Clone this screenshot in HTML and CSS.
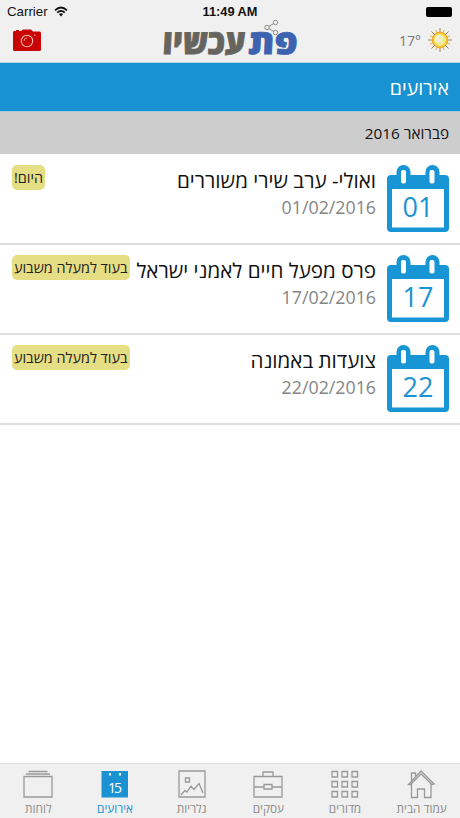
FILE: index.html
```html
<!DOCTYPE html>
<html lang="he" dir="rtl">
  <head>
    <meta charset="utf-8" />
    <title>אירועים</title>
    <link rel="stylesheet" href="styles.css">
  </head>

  <body>
    <div class="app">
      <header class="header">
        <div class="status" dir="ltr">
          <div class="carrier">
            <span>Carrier</span>
            <svg width="14" height="11" viewBox="0 0 14 11">
              <g fill="none" stroke="#111" stroke-width="1.7">
                <path d="M1 4.3 Q7 -1.3 13 4.3" />
                <path d="M3.2 6.7 Q7 3 10.8 6.7" />
              </g>
              <path d="M4.9 8.1 Q7 6.3 9.1 8.1 L7 10.4 Z" fill="#111" />
            </svg>
          </div>
          <div class="time">11:49 AM</div>
          <div class="battery"></div>
        </div>
        <div class="navbar" dir="ltr">
          <svg class="camera" width="28" height="22" viewBox="0 0 28 22">
            <path d="M1 2 H3 V1 H6 V2 H8 L10 0.500 H18 L20 2.500 H26.500 Q28 2.500 28 4 V20.500 Q28 22 26.500 22 H1.500 Q0 22 0 20.500 V3.500 Q0 2 1 2 Z" fill="#c90404" />
            <circle cx="14" cy="12" r="5.700" fill="none" stroke="#f3b9b5" stroke-width="1.100" />
            <path d="M11 12 a3 3 0 0 1 3 -3" fill="none" stroke="#f3b9b5" stroke-width="0.800" />
            <circle cx="21.800" cy="6.200" r="0.700" fill="#f3b9b5" />
          </svg>
          <svg class="logo" width="140" height="54" viewBox="-2 -9 140 54">
            <g transform="translate(0 31) skewX(-3)" class="logo-text">
              <text x="86" y="0" textLength="49" lengthAdjust="spacingAndGlyphs" fill="#3d62b0" stroke="#3d62b0">פת</text>
              <text x="0" y="0" textLength="83" lengthAdjust="spacingAndGlyphs" fill="#66645f" stroke="#66645f">עכשיו</text>
            </g>
            <g fill="#f0f0f0" stroke="#8c8c8c" stroke-width="1">
              <path d="M113.500 -0.500 L105 4.500 L113.500 9.500" fill="none" />
              <circle cx="113.500" cy="-0.500" r="2.200" />
              <circle cx="105" cy="4.500" r="2.200" />
              <circle cx="113.500" cy="9.500" r="2.200" />
            </g>
          </svg>
          <div class="weather">
            <span>17°</span>
            <svg width="26" height="26" viewBox="-13 -13 26 26">
              <g stroke="#8d7d3c" stroke-width="0.9">
                <path d="M0 -12V12M-12 0H12M-8.500 -8.500L8.500 8.500M-8.500 8.500L8.500 -8.500" />
                <path d="M-4.200 -10L4.200 10M-10 -4.200L10 4.200M4.200 -10L-4.200 10M10 -4.200L-10 4.200" stroke="#e3a532" />
              </g>
              <circle r="7.600" fill="#f8cf35" stroke="#eda72c" stroke-width="1.200" />
              <circle r="5.900" fill="#f0e98a" />
              <circle cx="-1" cy="-1" r="4" fill="#eef1cb" />
            </svg>
          </div>
        </div>
      </header>

      <h1 class="title">אירועים</h1>
      <h2 class="month">פברואר 2016</h2>

      <svg class="defs" width="0" height="0">
        <symbol id="calendar" viewBox="0 0 62 68">
          <path d="M4 10 H9.500 V7 A7 7 0 0 1 23.500 7 V10 H38.500 V7 A7 7 0 0 1 52.500 7 V10 H58 Q62 10 62 14 V63 Q62 67 58 67 H4 Q0 67 0 63 V14 Q0 10 4 10 Z" fill="#1795d4" />
          <rect x="14" y="5" width="5" height="13.500" rx="2" fill="#fff" />
          <rect x="42.500" y="5" width="5" height="13.500" rx="2" fill="#fff" />
          <rect x="5" y="24" width="52" height="38.500" fill="#fff" />
        </symbol>
      </svg>

      <main class="events">
        <div class="event">
          <div class="cal">
            <svg width="62" height="68"><use href="#calendar" /></svg>
            <span class="day">01</span>
          </div>
          <div class="info">
            <div class="name">ואולי- ערב שירי משוררים</div>
            <div class="date">01/02/2016</div>
          </div>
          <div class="badge">היום!</div>
        </div>
        <div class="event">
          <div class="cal">
            <svg width="62" height="68"><use href="#calendar" /></svg>
            <span class="day">17</span>
          </div>
          <div class="info">
            <div class="name">פרס מפעל חיים לאמני ישראל</div>
            <div class="date">17/02/2016</div>
          </div>
          <div class="badge">בעוד למעלה משבוע</div>
        </div>
        <div class="event">
          <div class="cal">
            <svg width="62" height="68"><use href="#calendar" /></svg>
            <span class="day">22</span>
          </div>
          <div class="info">
            <div class="name">צועדות באמונה</div>
            <div class="date">22/02/2016</div>
          </div>
          <div class="badge">בעוד למעלה משבוע</div>
        </div>
      </main>

      <nav class="tabs">
        <div class="tab">
          <svg width="30" height="30" viewBox="0 0 30 30">
            <path d="M1.500 15.500 L14 2 L27 15 L25 15.500 L14 5 L3.500 15.500 Z M4.500 11.500 V4 H8.500 V7 M4.500 15 V28.500 H10.500 V20 H17.500 V28.500 H24 V15" />
          </svg>
          <span>עמוד הבית</span>
        </div>
        <div class="tab">
          <svg width="30" height="30" viewBox="0 0 30 30">
            <path d="M2 2.500h5.500v5.500h-5.500zM12 2.500h5.500v5.500h-5.500zM22 2.500h5.500v5.500h-5.500zM2 12.500h5.500v5.500h-5.500zM12 12.500h5.500v5.500h-5.500zM22 12.500h5.500v5.500h-5.500zM2 22.500h5.500v5.500h-5.500zM12 22.500h5.500v5.500h-5.500zM22 22.500h5.500v5.500h-5.500z" />
          </svg>
          <span>מדורים</span>
        </div>
        <div class="tab">
          <svg width="30" height="30" viewBox="0 0 30 30">
            <path d="M1 7.500 H29 V28 H1 Z M10 7.500 V3 H20 V7.500 M1 18 H11 M19 18 H29 M11 15.500 H19 V20 H11 Z" />
          </svg>
          <span>עסקים</span>
        </div>
        <div class="tab">
          <svg width="30" height="30" viewBox="0 0 30 30">
            <path d="M2 2 H28 V28 H2 Z M4 26 L8 21.500 L10 23 L14 17 L17 20.500 L22 14.500 L26 24 M8.500 9 h4 v4 h-4 z" />
          </svg>
          <span>גלריות</span>
        </div>
        <div class="tab active">
          <svg width="30" height="30" viewBox="0 0 30 30">
            <rect x="1.500" y="2" width="26.500" height="26.500" fill="#1b93d3" stroke="none" />
            <path d="M10 4 v2.500 M20 4 v2.500" stroke="#fff" stroke-width="2" />
            <text x="8" y="23.500" textLength="14" class="icon-day">15</text>
          </svg>
          <span>אירועים</span>
        </div>
        <div class="tab">
          <svg width="30" height="30" viewBox="0 0 30 30">
            <path d="M1 7.500 H29 V28 H1 Z M3 5 H27 M5.500 2.500 H24.500" />
          </svg>
          <span>לוחות</span>
        </div>
      </nav>
    </div>
  </body>
</html>
```
FILE: styles.css
```css
body {
  margin: 0;
  background-color: #fff;
  font-family: "Open Sans", "Noto Sans", sans-serif;
}
.app {
  display: flex;
  flex-direction: column;
  height: 818px;
  overflow: hidden;
}
.header {
  box-sizing: border-box;
  height: 63px;
  background-color: #f0f0f0;
  border-bottom: 1px solid #b5d5e6;
}
.status {
  display: grid;
  grid-template-columns: 1fr auto 1fr;
  align-items: center;
  height: 23px;
  padding: 0 7px;
  font-family: "Liberation Sans", sans-serif;
  font-size: 13.3px;
  color: #111;
}
.carrier {
  display: flex;
  align-items: center;
  gap: 6px;
}
.time {
  font-weight: bold;
  font-size: 12.8px;
}
.battery {
  justify-self: end;
  width: 25px;
  height: 10px;
  margin-right: 2px;
  border-radius: 2px;
  background-color: #000;
  box-shadow: 1px 0 0 #000;
}
.navbar {
  display: grid;
  grid-template-columns: 1fr auto 1fr;
  height: 39px;
  padding: 0 13px;
}
.camera {
  margin-top: 6px;
}
.logo {
  margin-top: -9px;
}
.logo-text {
  font-size: 34px;
  font-weight: 800;
  direction: ltr;
  stroke-width: 0.8px;
}
.weather {
  display: flex;
  justify-content: flex-end;
  align-items: center;
  gap: 6px;
  height: 34px;
  margin-right: -6px;
  font-size: 14px;
  color: #777;
}
.title {
  box-sizing: border-box;
  height: 49px;
  margin: 0;
  padding: 0 11px;
  border-bottom: 1px solid #a9cde0;
  background-color: #1992d1;
  color: #fff;
  font-size: 19.5px;
  font-weight: 400;
  line-height: 49px;
}
.month {
  height: 42px;
  margin: 0;
  padding: 0 11px;
  background-color: #cdcdcd;
  color: #111;
  font-size: 15.3px;
  font-weight: 400;
  line-height: 43px;
}
.defs {
  position: absolute;
}
.events {
  flex: 1;
  padding-top: 1px;
}
.event {
  display: flex;
  box-sizing: border-box;
  height: 90px;
  padding: 10px 11px 0 12px;
  border-bottom: 2px solid #dedede;
}
.cal {
  display: grid;
  width: 62px;
  height: 68px;
}
.cal > * {
  grid-area: 1 / 1;
}
.day {
  padding-top: 22px;
  text-align: center;
  font-size: 27px;
  line-height: 40px;
  color: #1b93d3;
}
.info {
  flex: 1;
  margin-right: 11px;
  white-space: nowrap;
}
.name {
  font-size: 20.6px;
  line-height: 30px;
  color: #111;
}
.date {
  font-size: 17.8px;
  line-height: 24px;
  color: #858585;
}
.badge {
  height: 25px;
  padding: 0 2px;
  border-radius: 5px;
  background-color: #e6de84;
  color: #222;
  font-size: 14.4px;
  line-height: 25px;
  white-space: nowrap;
}
.tabs {
  display: grid;
  grid-template-columns: repeat(6, 1fr);
  box-sizing: border-box;
  height: 55px;
  border-top: 1px solid #ddd;
  background-color: #f0f0f0;
}
.tab {
  display: flex;
  flex-direction: column;
  align-items: center;
  padding-top: 5px;
  color: #8c8c8c;
  font-size: 11.8px;
  line-height: 19px;
  white-space: nowrap;
}
.tab svg {
  fill: none;
  stroke: #999;
  stroke-width: 1.3;
}
.tab .icon-day {
  direction: ltr;
  fill: #fff;
  stroke: none;
  font-size: 14px;
}
.active {
  color: #1b93d3;
}
```
